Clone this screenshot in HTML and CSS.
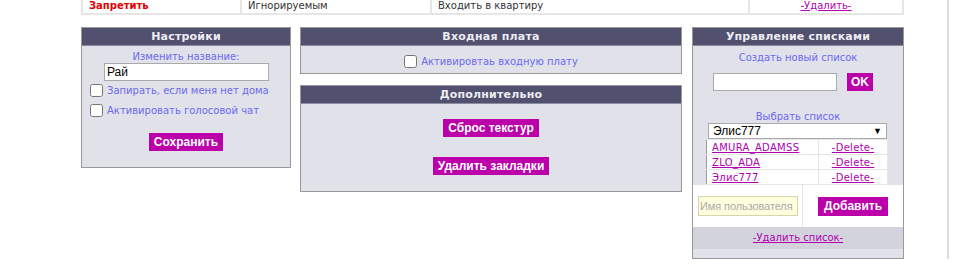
FILE: index.html
```html
<!DOCTYPE html>
<html lang="ru">
  <head>
    <meta charset="UTF-8" />
    <title>Настройки квартиры</title>
    <link rel="stylesheet" href="styles.css">
  </head>
  <body>
    <div class="page">
      <table class="rules">
        <tr>
          <td class="deny">Запретить</td>
          <td>Игнорируемым</td>
          <td>Входить в квартиру</td>
          <td class="act"><a href="#">-Удалить-</a></td>
        </tr>
      </table>

      <div class="panels">
        <div class="col col-left">
          <div class="box">
            <div class="box-head">Настройки</div>
            <div class="box-body settings">
              <div class="label">Изменить название:</div>
              <input class="name" type="text" value="Рай" />
              <label class="check"><input type="checkbox" /> Запирать, если меня нет дома</label>
              <label class="check"><input type="checkbox" /> Активировать голосовой чат</label>
              <div class="center"><span class="btn">Сохранить</span></div>
            </div>
          </div>
        </div>

        <div class="col col-mid">
          <div class="box">
            <div class="box-head">Входная плата</div>
            <div class="box-body fee">
              <label class="check"><input type="checkbox" /> Активировтаь входную плату</label>
            </div>
          </div>
          <div class="box">
            <div class="box-head">Дополнительно</div>
            <div class="box-body extra">
              <span class="btn">Сброс текстур</span>
              <span class="btn">Удалить закладки</span>
            </div>
          </div>
        </div>

        <div class="col col-right">
          <div class="box">
            <div class="box-head">Управление списками</div>
            <div class="box-body lists">
              <div class="label">Создать новый список</div>
              <div class="new-list">
                <input class="list-name" type="text" />
                <span class="btn">OK</span>
              </div>
              <div class="label pick">Выбрать список</div>
              <div class="select"><span>Элис777</span><span class="arrow">▼</span></div>
              <table class="members">
                <tr><td><a href="#">AMURA_ADAMSS</a></td><td class="del"><a href="#">-Delete-</a></td></tr>
                <tr><td><a href="#">ZLO_ADA</a></td><td class="del"><a href="#">-Delete-</a></td></tr>
                <tr><td><a href="#">Элис777</a></td><td class="del"><a href="#">-Delete-</a></td></tr>
              </table>
              <div class="add-row">
                <div class="add-cell"><input class="user" type="text" placeholder="Имя пользователя" /></div>
                <div class="add-cell add-btn"><span class="btn">Добавить</span></div>
              </div>
              <div class="remove"><a href="#">-Удалить список-</a></div>
            </div>
          </div>
        </div>
      </div>
    </div>
  </body>
</html>
```

FILE: styles.css
```css
* {
  margin: 0;
  padding: 0;
  box-sizing: border-box;
}
body {
  background: #fff;
  font-family: "DejaVu Sans", Verdana, sans-serif;
  font-size: 10px;
  color: #333;
  overflow: hidden;
}
a {
  color: #b000b0;
}
.page {
  width: 949px;
  min-height: 264px;
  border-right: 2px solid #dcdcdc;
  padding-left: 81px;
}

/* top rules row */
.rules {
  width: 823px;
  margin-top: -9px;
  border-collapse: collapse;
}
.rules td {
  border: 2px solid #e6e6e6;
  height: 22px;
  padding: 4px 6px 0;
  vertical-align: middle;
  font-size: 10px;
}
.rules td:nth-child(1) { width: 159px; }
.rules td:nth-child(2) { width: 190px; }
.rules td:nth-child(3) { width: 318px; }
.rules .deny {
  color: #e00000;
  font-weight: bold;
}
.rules .act {
  text-align: center;
}

/* panels */
.panels {
  display: flex;
  align-items: flex-start;
  margin-top: 12px;
}
.col {
  display: flex;
  flex-direction: column;
  gap: 11px;
}
.col-left { width: 210px; }
.col-mid { width: 382px; margin-left: 9px; }
.col-right { width: 212px; margin-left: 10px; }

.box {
  border: 1px solid #999;
  background: #e1e1e9;
}
.box-head {
  height: 18px;
  line-height: 17px;
  background: #51506f;
  border-bottom: 1px solid #8c8ca0;
  color: #ececf2;
  font-weight: bold;
  font-size: 11px;
  letter-spacing: 0.2px;
  text-align: center;
}
.label {
  color: #6a6af0;
  text-align: center;
  line-height: 12px;
}
.check {
  display: flex;
  align-items: center;
  color: #6a6af0;
}
.check input {
  width: 13px;
  height: 13px;
  margin: 0 4px 0 0;
}
.btn {
  display: inline-block;
  background: #bb00aa;
  color: #fff;
  font-family: "Liberation Sans", Arial, sans-serif;
  font-weight: bold;
  font-size: 12px;
  line-height: 18px;
  padding: 0 5px;
}
.center {
  text-align: center;
}

.settings {
  height: 121px;
  padding: 5px 0 0 8px;
}
.settings .label {
  margin-left: -8px;
}
.settings .name {
  display: block;
  width: 165px;
  height: 18px;
  margin: 0 0 0 14px;
  border: 1px solid #aaa;
  padding: 0 2px;
  font-family: "Liberation Sans", Arial, sans-serif;
  font-size: 12px;
  color: #000;
}
.settings .check {
  height: 20px;
}
.settings .check:first-of-type {
  margin-top: -1px;
}
.settings .center {
  margin: 13px 0 0 -8px;
}

.fee {
  height: 27px;
  display: flex;
  justify-content: center;
  align-items: center;
  padding-top: 3px;
}
.extra {
  height: 87px;
  display: flex;
  flex-direction: column;
  align-items: center;
  gap: 20px;
  padding-top: 15px;
}

.lists {
  padding-top: 6px;
}
.new-list {
  display: flex;
  align-items: center;
  margin: 9px 0 0 20px;
}
.list-name {
  width: 124px;
  height: 18px;
  border: 1px solid #aaa;
}
.new-list .btn {
  margin-left: 10px;
  padding: 0 4px;
}
.pick {
  margin-top: 20px;
}
.select {
  display: flex;
  justify-content: space-between;
  align-items: center;
  width: 179px;
  height: 16px;
  margin: 0 0 0 15px;
  background: #fff;
  border: 1px solid #aaa;
  padding: 0 4px;
  font-family: "Liberation Sans", Arial, sans-serif;
  font-size: 12px;
  color: #000;
}
.select .arrow {
  font-size: 9px;
}
.members {
  width: 182px;
  margin-left: 13px;
  border-collapse: collapse;
  background: #fff;
  table-layout: fixed;
}
.members td {
  height: 15px;
  border: 1px solid #e6e6e6;
  padding: 0 0 0 5px;
  line-height: 13px;
  letter-spacing: 0.3px;
}
.members td:first-child {
  width: 112px;
  border-left-color: #999;
}
.members .del {
  padding: 0;
  text-align: center;
}
.add-row {
  display: flex;
  height: 42px;
  background: #fff;
}
.add-cell {
  display: flex;
  align-items: center;
  width: 110px;
  padding-left: 5px;
  border-right: 1px solid #e6e6e6;
}
.add-btn {
  flex: 1;
  justify-content: center;
  border-right: none;
  padding-left: 0;
}
.user {
  width: 100px;
  height: 20px;
  background: #ffffe0;
  border: 1px solid #d6d6a8;
  padding: 0 1px;
  font-family: "Liberation Sans", Arial, sans-serif;
  font-size: 11px;
  letter-spacing: -0.1px;
}
.user::placeholder {
  color: #aaa;
}
.add-btn .btn {
  line-height: 19px;
  padding: 0 6px;
}
.remove {
  height: 22px;
  line-height: 22px;
  background: #d3d3dd;
  text-align: center;
  margin-bottom: 9px;
}
```
